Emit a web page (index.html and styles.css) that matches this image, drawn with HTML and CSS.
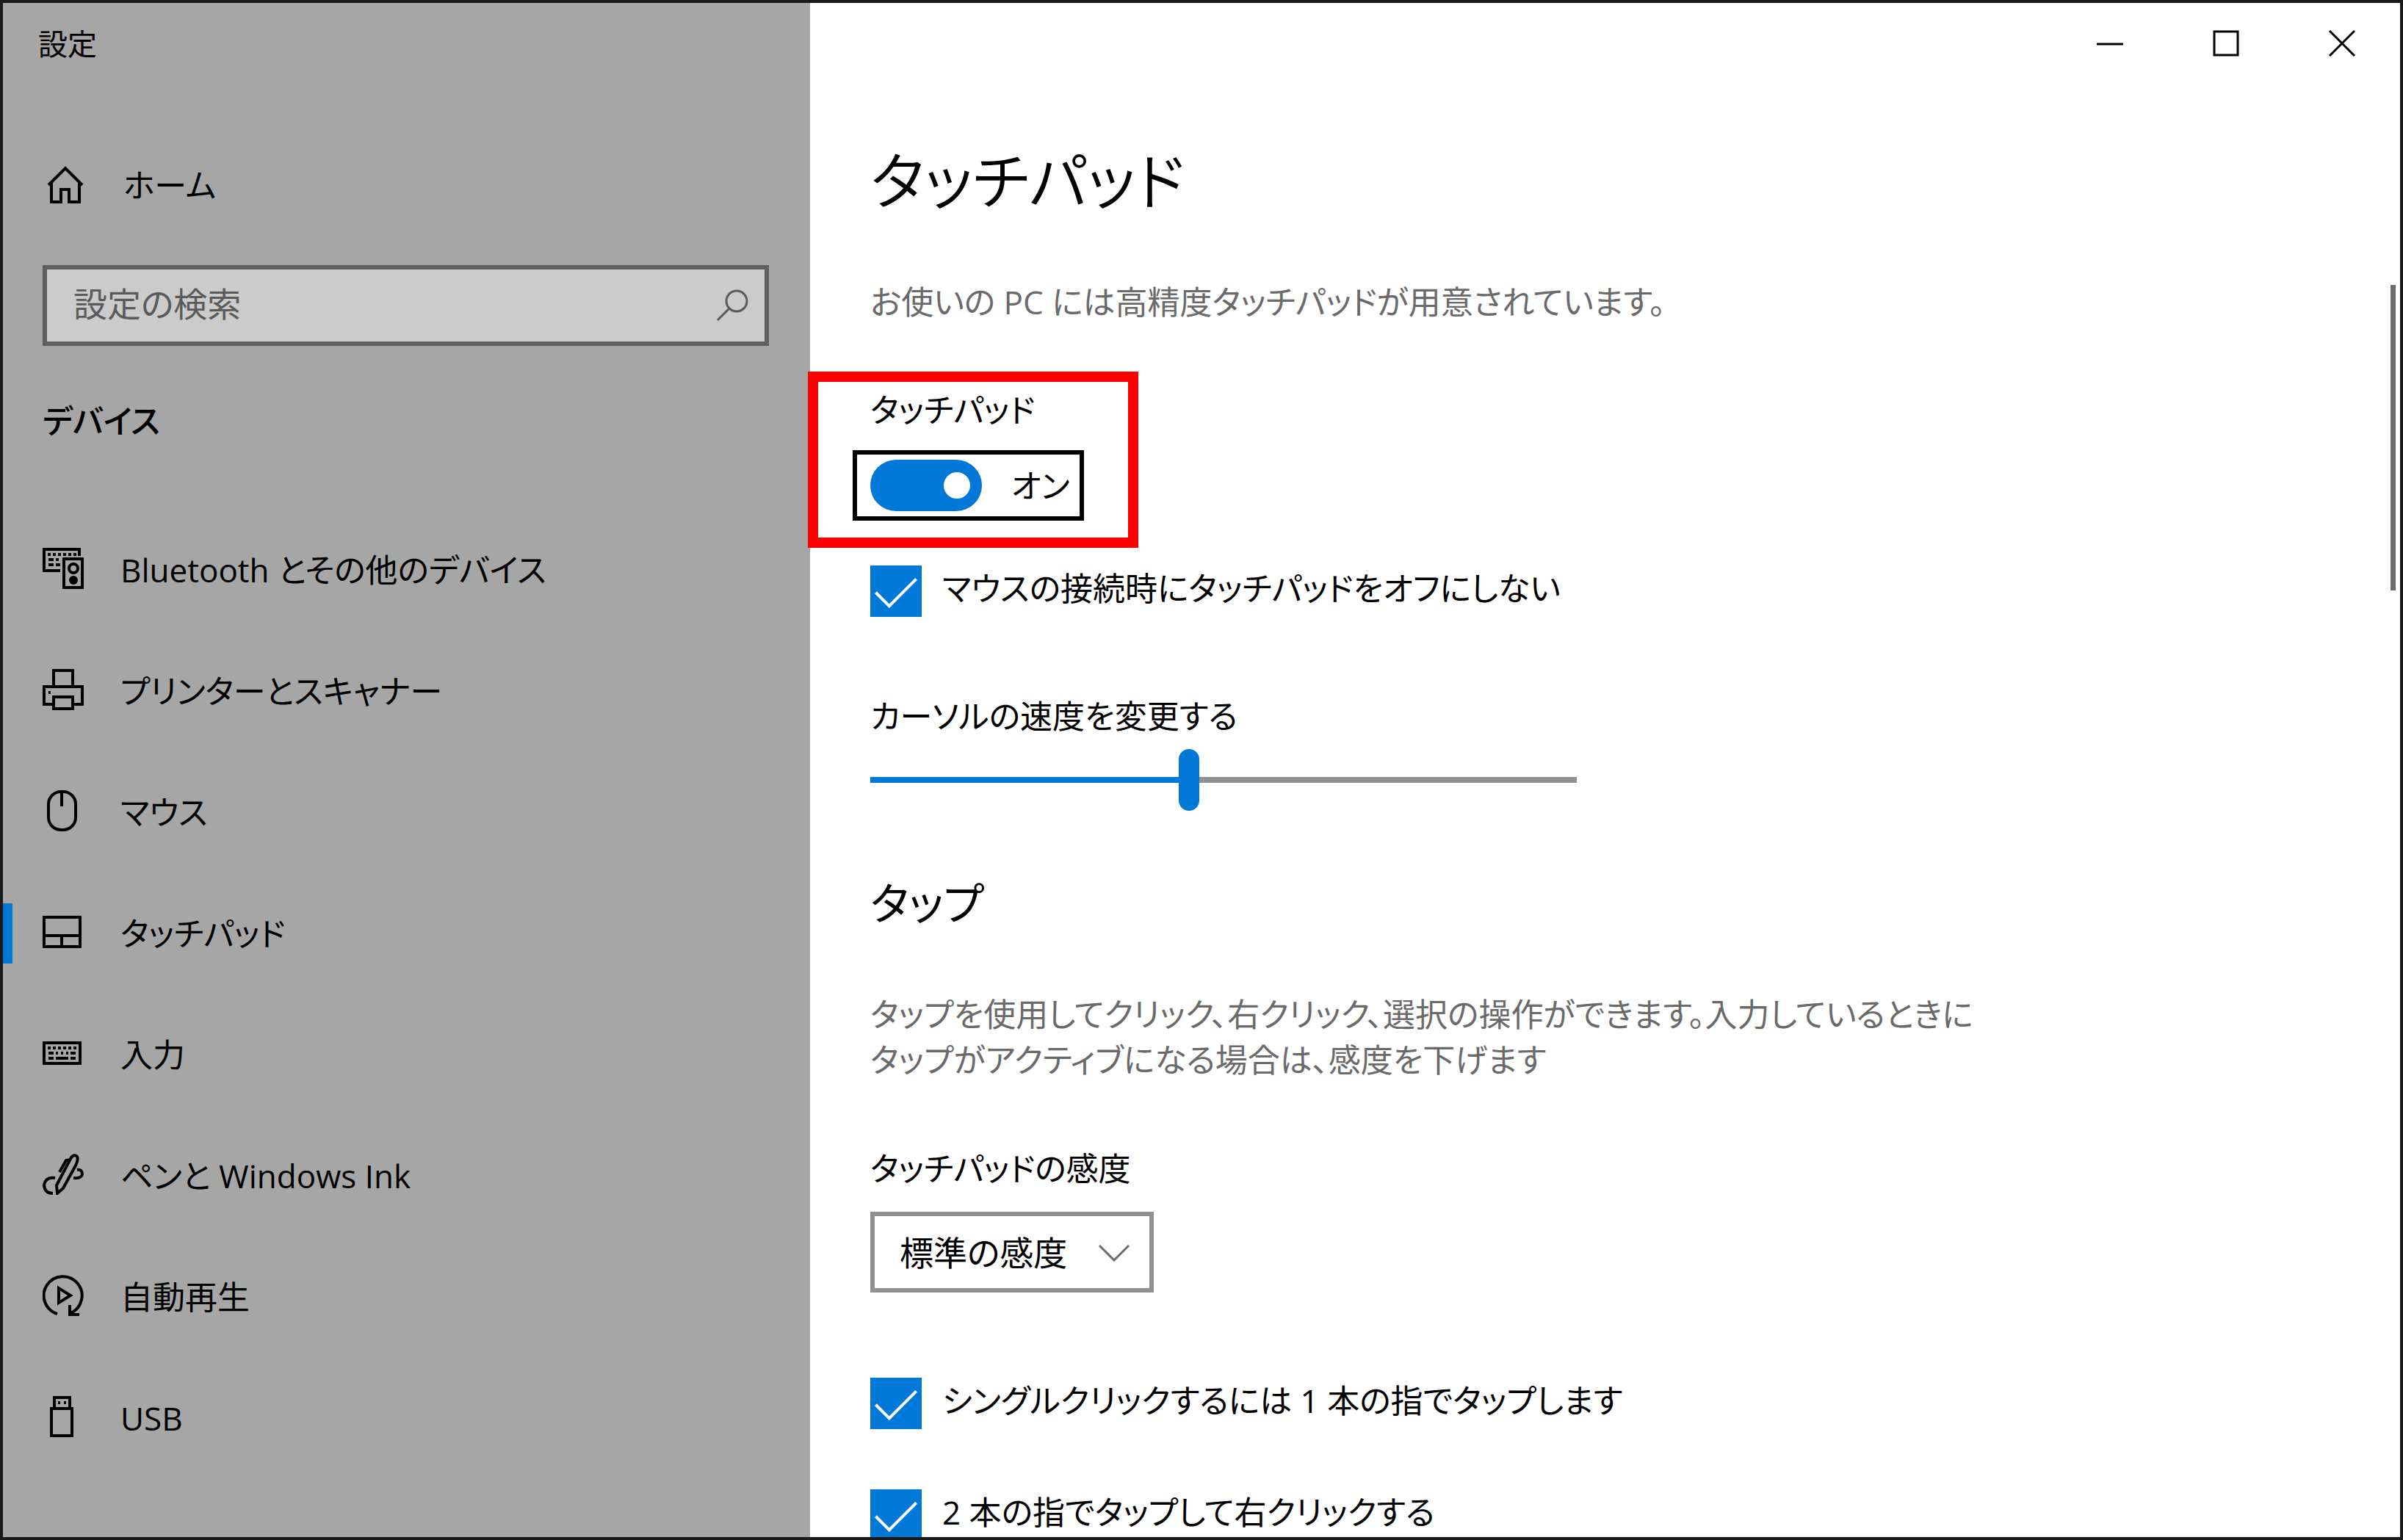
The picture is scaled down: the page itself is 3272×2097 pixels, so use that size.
FILE: index.html
```
<!DOCTYPE html>
<html lang="ja">
<head>
    <meta charset="UTF-8">
    <meta name="viewport" content="width=device-width, initial-scale=1.0">
    <title>設定</title>
    <link rel="stylesheet" href="styles.css">
</head>
<body>
    <div class="window">
        <!-- Sidebar -->
        <aside class="sidebar">
            <div class="window-title">設定</div>

            <a href="#" class="home-link">
                <svg class="icon" viewBox="0 0 56 56"><path d="M4 28 L27 5 L50 28 M8 25 V51 H21 V34 H32 V51 H46 V25"/></svg>
                <span>ホーム</span>
            </a>

            <div class="search-box">
                <input type="text" class="search-input" placeholder="設定の検索" aria-label="設定の検索">
                <svg class="search-icon" viewBox="0 0 44 44"><circle cx="28" cy="16" r="14"/><path d="M18 26 L2 42"/></svg>
            </div>

            <h2 class="sidebar-heading">デバイス</h2>

            <nav class="nav">
                <a href="#" class="nav-item">
                    <svg class="icon" viewBox="0 0 56 56"><path d="M24 31 H2 V2 H50 V11 M29 15 H54 V54 H29 Z"/><circle cx="42" cy="28" r="6"/><circle class="solid" cx="42" cy="44" r="4"/><path class="dots" d="M7 9 H46"/><path d="M8 16 H15 M18 16 H22 M8 23 H15 M18 23 H24"/></svg>
                    <span>Bluetooth とその他のデバイス</span>
                </a>
                <a href="#" class="nav-item">
                    <svg class="icon" viewBox="0 0 56 56"><path d="M15 24 V2 H41 V24 M15 48 H2 V24 H54 V48 H41 M15 38 H41 V54 H15 Z M8 32 H11"/></svg>
                    <span>プリンターとスキャナー</span>
                </a>
                <a href="#" class="nav-item">
                    <svg class="icon" viewBox="0 0 56 56"><rect x="8" y="2" width="37" height="52" rx="17"/><path d="M26 2 V22"/></svg>
                    <span>マウス</span>
                </a>
                <a href="#" class="nav-item active">
                    <svg class="icon" viewBox="0 0 56 56"><path d="M2 8 H51 V48 H2 Z M2 33 H51 M26 33 V48"/></svg>
                    <span>タッチパッド</span>
                </a>
                <a href="#" class="nav-item">
                    <svg class="icon" viewBox="0 0 56 56"><path d="M2 14 H51 V42 H2 Z"/><path class="dots" d="M7 21 H46"/><path d="M8 28 H15 M18 28 H21 M25 28 H28 M32 28 H35 M38 28 H45 M8 35 H15 M18 35 H35 M38 35 H45"/></svg>
                    <span>入力</span>
                </a>
                <a href="#" class="nav-item">
                    <svg class="icon" viewBox="0 0 56 56"><path d="M20 54 L19 43 L39 5 Q43 0 47 4 Q49 8 45 16 L28 47 Z M23 25 L32 9 L38 8 M17 33 Q4 31 2 43 Q3 54 14 54 M47 22 Q54 21 54 28 Q53 34 42 33"/></svg>
                    <span>ペンと Windows Ink</span>
                </a>
                <a href="#" class="nav-item">
                    <svg class="icon" viewBox="0 0 56 56"><path d="M20 53 A26 26 0 1 1 38 52 M37 41 V54 H50 M22 18 V38 L38 28 Z"/></svg>
                    <span>自動再生</span>
                </a>
                <a href="#" class="nav-item">
                    <svg class="icon" viewBox="0 0 56 56"><path d="M12 17 H40 V54 H12 Z M16 17 V2 H37 V17 M21 9 H24 M29 9 H32"/></svg>
                    <span>USB</span>
                </a>
            </nav>
        </aside>

        <!-- Settings page -->
        <main class="content">
            <div class="window-buttons">
                <button type="button" aria-label="最小化"><svg viewBox="0 0 36 36"><path d="M0 19 H36"/></svg></button>
                <button type="button" aria-label="最大化"><svg viewBox="0 0 36 36"><path d="M2 2 H34 V34 H2 Z"/></svg></button>
                <button type="button" aria-label="閉じる"><svg viewBox="0 0 36 36"><path d="M1 1 L35 35 M35 1 L1 35"/></svg></button>
            </div>

            <h1>タッチパッド</h1>
            <p class="intro">お使いの PC には高精度タッチパッドが用意されています。</p>

            <div class="highlight">
                <label for="touchpad">タッチパッド</label>
                <div class="toggle">
                    <input type="checkbox" id="touchpad" class="switch" role="switch" checked>
                    <span>オン</span>
                </div>
            </div>

            <label class="check mouse-check">
                <input type="checkbox" class="checkbox" checked>
                <span>マウスの接続時にタッチパッドをオフにしない</span>
            </label>

            <label for="speed" class="field-label">カーソルの速度を変更する</label>
            <input type="range" id="speed" class="slider" min="0" max="100" value="45">

            <h2 class="section-title">タップ</h2>
            <p class="description">タップを使用してクリック、右クリック、選択の操作ができます。入力しているときに<br>タップがアクティブになる場合は、感度を下げます</p>

            <label for="sensitivity" class="field-label">タッチパッドの感度</label>
            <div class="select-box">
                <select id="sensitivity">
                    <option>標準の感度</option>
                </select>
                <svg class="chevron" viewBox="0 0 44 24"><path d="M2 2 L22 22 L42 2"/></svg>
            </div>

            <div class="check-list">
                <label class="check">
                    <input type="checkbox" class="checkbox" checked>
                    <span>シングルクリックするには 1 本の指でタップします</span>
                </label>
                <label class="check">
                    <input type="checkbox" class="checkbox" checked>
                    <span>2 本の指でタップして右クリックする</span>
                </label>
            </div>

            <div class="scrollbar"></div>
        </main>
    </div>
</body>
</html>
```
FILE: styles.css
```
* {
    box-sizing: border-box;
}
body {
    margin: 0;
    font-family: "Open Sans", "Noto Sans CJK JP", sans-serif;
    font-size: 44px;
    line-height: 62px;
    font-feature-settings: "palt";
    color: #000;
}
h1, h2, p {
    margin: 0;
    font-weight: normal;
}
input, select, button {
    font: inherit;
    font-feature-settings: inherit;
    color: inherit;
    margin: 0;
}
svg {
    fill: none;
    stroke: currentColor;
    stroke-width: 3;
    flex-shrink: 0;
}
.window {
    display: flex;
    height: 100vh;
    border: 4px solid #1a1a1a;
    overflow: hidden;
    background-color: #fff;
}

/* Sidebar */
.sidebar {
    width: 1099px;
    flex-shrink: 0;
    background-color: #a6a6a6;
}
.window-title {
    padding: 25px 48px;
    font-size: 40px;
}
.home-link {
    display: flex;
    align-items: center;
    gap: 50px;
    padding: 0 58px;
    margin-top: 105px;
    color: inherit;
    text-decoration: none;
}
.icon {
    width: 56px;
    height: 56px;
    stroke-width: 4;
}
.dots {
    stroke-dasharray: 4 3;
}
.solid {
    fill: currentColor;
}
.search-box {
    display: flex;
    align-items: center;
    margin: 78px 56px 0 54px;
    height: 110px;
    padding: 0 22px 0 36px;
    border: 6px solid #5f5f5f;
    background-color: #cbcbcb;
}
.search-input {
    flex: 1;
    border: none;
    padding: 0 0 6px;
    background: none;
    font-size: 46px;
}
.search-input::placeholder {
    color: #5a5a5a;
    opacity: 1;
}
.search-icon {
    width: 44px;
    height: 44px;
    color: #5a5a5a;
}
.sidebar-heading {
    margin: 71px 54px 89px;
    font-size: 44px;
    font-weight: 500;
}
.nav-item {
    display: flex;
    align-items: center;
    gap: 50px;
    height: 165px;
    padding-left: 54px;
    color: inherit;
    text-decoration: none;
}
.nav-item .icon {
    margin-bottom: 4px;
}
.nav-item.active::before {
    content: "";
    width: 13px;
    height: 82px;
    margin-left: -54px;
    margin-right: -9px;
    background-color: #0078d7;
}

/* Content */
.content {
    position: relative;
    flex: 1;
    padding-left: 82px;
}
.window-buttons {
    display: flex;
    justify-content: flex-end;
}
.window-buttons button {
    display: flex;
    justify-content: center;
    align-items: center;
    width: 158px;
    height: 110px;
    border: none;
    background: none;
}
.window-buttons svg {
    width: 36px;
    height: 36px;
}
h1 {
    margin-top: 70px;
    font-size: 84px;
    line-height: 124px;
    font-weight: 350;
}
.intro {
    margin-top: 72px;
    color: #6a6a6a;
}
.highlight {
    width: 450px;
    height: 240px;
    margin: 64px 0 0 -85px;
    padding: 7px 47px;
    border: 14px solid #f00;
}
.highlight label {
    display: block;
    padding-left: 24px;
}
.toggle {
    display: flex;
    align-items: center;
    gap: 40px;
    height: 96px;
    width: 315px;
    margin-top: 24px;
    padding-left: 18px;
    border: 6px solid #000;
}
.switch {
    appearance: none;
    display: flex;
    justify-content: flex-end;
    align-items: center;
    width: 152px;
    height: 70px;
    padding-right: 16px;
    border-radius: 35px;
    background-color: #0078d7;
}
.switch::before {
    content: "";
    width: 36px;
    height: 36px;
    border-radius: 50%;
    background-color: #fff;
}
.check {
    display: flex;
    align-items: center;
    gap: 28px;
    height: 70px;
}
.check span {
    padding-bottom: 8px;
}
.mouse-check {
    margin-top: 24px;
}
.checkbox {
    appearance: none;
    display: flex;
    justify-content: center;
    align-items: center;
    width: 70px;
    height: 70px;
    background-color: #0078d7;
}
.checkbox:checked::before {
    content: "";
    width: 50px;
    height: 24px;
    border: solid #fff;
    border-width: 0 0 4px 4px;
    transform: translateY(-6px) rotate(-45deg);
}
.field-label {
    display: block;
    margin-top: 104px;
}
.slider {
    appearance: none;
    display: block;
    width: 962px;
    height: 84px;
    margin-top: 14px;
    background: linear-gradient(to right, #0078d7 45%, #919191 45%) center / 100% 8px no-repeat;
}
.slider::-webkit-slider-thumb {
    appearance: none;
    width: 28px;
    height: 84px;
    border-radius: 14px;
    background-color: #0078d7;
}
.section-title {
    margin-top: 82px;
    font-size: 60px;
    line-height: 88px;
}
.description {
    margin-top: 76px;
    color: #6a6a6a;
}
.description + .field-label {
    margin-top: 86px;
}
.select-box {
    position: relative;
    width: 386px;
    margin-top: 28px;
}
.select-box select {
    appearance: none;
    width: 100%;
    height: 110px;
    padding: 0 34px;
    border: 6px solid #919191;
    border-radius: 0;
    background-color: #fff;
    font-size: 46px;
}
.chevron {
    position: absolute;
    right: 32px;
    top: 44px;
    width: 44px;
    height: 24px;
    color: #6a6a6a;
    pointer-events: none;
}
.check-list {
    display: flex;
    flex-direction: column;
    gap: 82px;
    margin-top: 116px;
}
.scrollbar {
    position: absolute;
    top: 384px;
    right: 6px;
    width: 7px;
    height: 416px;
    background-color: #6d6d6d;
}
```
